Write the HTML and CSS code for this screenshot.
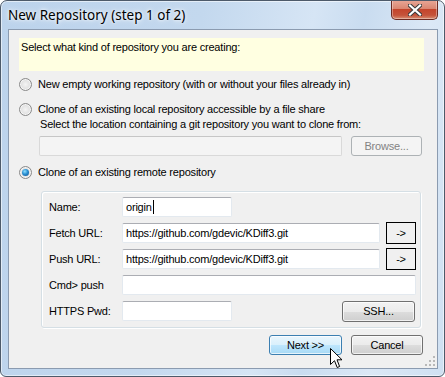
FILE: index.html
```html
<!DOCTYPE html>
<html lang="en">

<head>
    <meta charset="UTF-8">
    <title>New Repository (step 1 of 2)</title>
    <link rel="stylesheet" href="styles.css">
</head>

<body>
    <div class="window">
        <div class="titlebar">
            <span class="title">New Repository (step 1 of 2)</span>
            <div class="close">
                <svg width="14" height="12" viewBox="0 0 14 12">
                    <path d="M2 1.5 L12 10.5 M12 1.5 L2 10.5" stroke="#3b3b3b" stroke-width="4.2" stroke-linecap="square" />
                    <path d="M2 1.5 L12 10.5 M12 1.5 L2 10.5" stroke="#ffffff" stroke-width="2.2" stroke-linecap="square" />
                </svg>
            </div>
        </div>

        <div class="client">
            <div class="banner">Select what kind of repository you are creating:</div>

            <div class="option first"><span class="radio"></span>New empty working repository (with or without your files already in)</div>
            <div class="option second"><span class="radio"></span>Clone of an existing local repository accessible by a file share</div>
            <div class="hint">Select the location containing a git repository you want to clone from:</div>
            <div class="local-row">
                <div class="field disabled wide"></div>
                <div class="btn disabled browse">Browse...</div>
            </div>

            <div class="option third"><span class="radio checked"></span>Clone of an existing remote repository</div>

            <div class="group">
                <div class="row">
                    <span class="lbl">Name:</span>
                    <div class="field short">origin<span class="caret"></span></div>
                </div>
                <div class="row">
                    <span class="lbl">Fetch URL:</span>
                    <div class="field url">https://github.com/gdevic/KDiff3.git</div>
                    <div class="arrow-btn">-&gt;</div>
                </div>
                <div class="row">
                    <span class="lbl">Push URL:</span>
                    <div class="field url">https://github.com/gdevic/KDiff3.git</div>
                    <div class="arrow-btn">-&gt;</div>
                </div>
                <div class="row">
                    <span class="lbl">Cmd&gt; push</span>
                    <div class="field full"></div>
                </div>
                <div class="row">
                    <span class="lbl">HTTPS Pwd:</span>
                    <div class="field short"></div>
                    <div class="btn ssh">SSH...</div>
                </div>
            </div>

            <div class="actions">
                <div class="btn default">Next &gt;&gt;</div>
                <div class="btn cancel">Cancel</div>
            </div>

            <svg class="grip" width="11" height="11" viewBox="0 0 11 11">
                <g fill="#b8b8b8">
                    <rect x="8" y="0" width="2" height="2" />
                    <rect x="4" y="4" width="2" height="2" />
                    <rect x="8" y="4" width="2" height="2" />
                    <rect x="0" y="8" width="2" height="2" />
                    <rect x="4" y="8" width="2" height="2" />
                    <rect x="8" y="8" width="2" height="2" />
                </g>
            </svg>
        </div>

        <!-- mouse pointer resting over Next -->
        <svg class="pointer" width="13" height="21" viewBox="0 0 13 21">
            <path d="M0.5 0.5 L0.5 16.5 L4.5 12.7 L7.2 19.5 L9.6 18.5 L7 11.8 L12 11.8 Z" fill="#fff" stroke="#000" stroke-width="1" stroke-linejoin="miter" />
        </svg>
    </div>
</body>

</html>
```

FILE: styles.css
```css
* {
    box-sizing: border-box;
}

body {
    margin: 0;
    background: #ffffff;
    font-family: "Liberation Sans", Arial, sans-serif;
    font-size: 11px;
    letter-spacing: -0.2px;
    color: #000;
}

.window {
    position: relative;
    width: 445px;
    height: 377px;
    border: 1px solid #4d5a6a;
    border-radius: 7px 7px 6px 6px;
    background: linear-gradient(100deg, #bcd3ec 0%, #c3d8ee 40%, #d6e5f5 62%, #c9dcf0 72%, #dbe8f6 85%, #cfe0f2 100%);
    box-shadow: inset 0 0 0 1px rgba(255, 255, 255, 0.55);
    display: flex;
    flex-direction: column;
    overflow: hidden;
}

.titlebar {
    position: relative;
    height: 28px;
    flex: none;
}

.title {
    position: absolute;
    left: 7px;
    top: 5px;
    font-family: "Noto Sans", sans-serif;
    font-size: 13.5px;
    letter-spacing: 0;
    text-shadow: 0 0 6px #fff, 0 0 3px #fff;
}

.close {
    position: absolute;
    right: 6px;
    top: -1px;
    width: 47px;
    height: 20px;
    border: 1px solid #6b2a22;
    border-top: none;
    border-radius: 0 0 5px 5px;
    background: linear-gradient(to bottom, #e9a898 0%, #da8772 45%, #c4452c 50%, #c5533a 80%, #d88f73 100%);
    box-shadow: inset 0 0 0 1px rgba(255, 255, 255, 0.35);
    display: flex;
    align-items: center;
    justify-content: center;
}

.client {
    position: relative;
    flex: 1;
    margin: 0 6px 7px 7px;
    border: 1px solid #8b9bb0;
    background: #f0f0f0;
    display: flex;
    flex-direction: column;
}

.banner {
    margin: 8px 0 0 10px;
    width: 405px;
    height: 33px;
    padding: 2px 0 0 2px;
    line-height: 14px;
    background: #ffffe1;
}

.option {
    display: flex;
    align-items: center;
    height: 14px;
    margin-left: 10px;
    line-height: 14px;
}

.option.first {
    margin-top: 6px;
}

.option.second {
    margin-top: 11px;
}

.option.third {
    margin-top: 9px;
}

.radio {
    width: 13px;
    height: 13px;
    margin-right: 6px;
    border-radius: 50%;
    border: 1px solid #8a8a8a;
    background: radial-gradient(circle at 50% 50%, #f4f4f4 0%, #e2e2e2 55%, #d0d0d0 100%);
    box-shadow: inset 0 0 0 1px #f6f6f6;
    position: relative;
    flex: none;
}

.radio.checked::after {
    content: "";
    position: absolute;
    left: 2px;
    top: 2px;
    width: 7px;
    height: 7px;
    border-radius: 50%;
    background: radial-gradient(circle at 40% 35%, #8fe0ff 0%, #2a8fd2 45%, #0f4f8c 100%);
}

.hint {
    margin: 1px 0 0 31px;
    height: 14px;
    line-height: 14px;
}

.local-row {
    display: flex;
    gap: 9px;
    margin: 5px 0 0 30px;
}

.field {
    height: 20px;
    padding: 0 3px;
    line-height: 18px;
    background: #fff;
    border: 1px solid #e3e9ef;
    border-top-color: #abadb3;
    border-radius: 2px;
    white-space: nowrap;
    overflow: hidden;
}

.field.disabled {
    background: #f4f4f4;
    border-color: #d9d9d9;
    border-top-color: #c6c6c6;
}

.field.wide {
    width: 303px;
}

.field.short {
    width: 110px;
}

.field.url {
    width: 258px;
}

.field.full {
    width: 294px;
}

.caret {
    display: inline-block;
    width: 1px;
    height: 14px;
    margin-left: 1px;
    vertical-align: -3px;
    background: #000;
}

.btn {
    height: 20px;
    line-height: 18px;
    text-align: center;
    border: 1px solid #707070;
    border-radius: 3px;
    background: linear-gradient(to bottom, #f2f2f2 0%, #ebebeb 50%, #dddddd 51%, #cfcfcf 100%);
    box-shadow: inset 0 0 0 1px rgba(255, 255, 255, 0.7);
}

.btn.disabled {
    color: #838383;
    border-color: #adb2b5;
    background: #f4f4f4;
    box-shadow: none;
}

.browse {
    width: 71px;
}

.group {
    margin: 12px 0 0 32px;
    width: 380px;
    height: 137px;
    border: 1px solid #d5dfe5;
    border-radius: 3px;
    box-shadow: inset 1px 1px 0 #fff, 1px 1px 0 #fff;
    padding: 5px 4px 0 7px;
    display: flex;
    flex-direction: column;
    gap: 6px;
}

.row {
    display: flex;
    align-items: center;
    height: 20px;
}

.lbl {
    width: 73px;
    flex: none;
}

.arrow-btn {
    width: 30px;
    height: 22px;
    margin-left: 6px;
    line-height: 20px;
    text-align: center;
    border: 1px solid #000;
    background: #f0f0f0;
}

.ssh {
    width: 73px;
    margin-left: auto;
    margin-right: 1px;
    height: 21px;
}

.actions {
    display: flex;
    justify-content: flex-end;
    gap: 9px;
    margin: 7px 14px 0 0;
}

.actions .btn {
    width: 72px;
}

.btn.default {
    width: 73px;
    border-color: #3c7fb1;
    background: linear-gradient(to bottom, #eaf6fd 0%, #d9f0fc 50%, #bee6fd 51%, #a7d9f5 100%);
}

.grip {
    position: absolute;
    right: 1px;
    bottom: 1px;
}

.pointer {
    position: absolute;
    left: 329px;
    top: 347px;
}
```
